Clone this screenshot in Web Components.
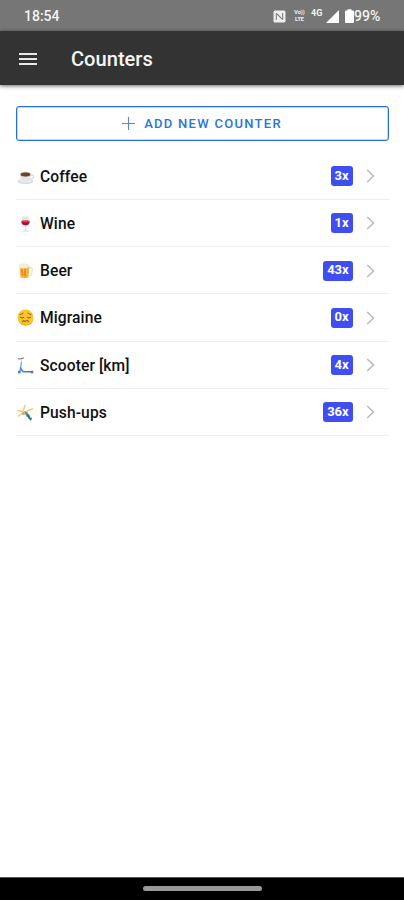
<!DOCTYPE html>
<html lang="en">
<head>
<meta charset="utf-8">
<title>Counters</title>
<style>
html,body{margin:0;height:100%;background:#fff}
body{font-family:Roboto,"Liberation Sans",sans-serif;overflow:hidden}
</style>
</head>
<body>
<counter-app></counter-app>
<script>
const define = (name, html) => {
  const template = document.createElement('template');
  template.innerHTML = html;
  customElements.define(name, class extends HTMLElement {
    constructor() {
      super();
      this.attachShadow({ mode: 'open' }).append(template.content.cloneNode(true));
    }
  });
};

const art = {
  coffee: '<ellipse cx="8.5" cy="13.3" rx="7.8" ry="2.7" fill="#d5d9dc"/><ellipse cx="8.5" cy="12.7" rx="6" ry="1.7" fill="#eef1f3"/><path d="M13 7.5q4-1.200 3.600 1.300-.5 2.200-4.400 2.400" fill="none" stroke="#d4d8db" stroke-width="1.200"/><path d="M3 6h11q0 7.500-4 7.500H7Q3 13.500 3 6z" fill="#e3e6e8"/><ellipse cx="8.500" cy="6.200" rx="5.500" ry="2.500" fill="#c6b8ae"/><ellipse cx="8.500" cy="6.500" rx="4.700" ry="1.900" fill="#70412c"/>',
  wine: '<path d="M5 1.500h7l.8 5.500q0 3.500-3.600 4v4l2.800 1v.8H5V16l2.800-1v-4Q4.200 10.500 4.200 7z" fill="#e2e5e9"/><path d="M4.400 6.300h8.200q.2 4-4.100 4-4.300 0-4.100-4z" fill="#b70c29"/><ellipse cx="8.500" cy="6.300" rx="4" ry="1.100" fill="#d83b50"/>',
  beer: '<path d="M11 6h3q1.500 0 1.300 2l-.6 4q-.3 1.500-3.200 2" fill="none" stroke="#e0e4e7" stroke-width="1.300"/><path d="M2.500 4h10l-1 11.500q-4 1.500-8 0z" fill="#f8b941"/><path d="M5 7l.5 7M8 7v7.500" stroke="#e88a1b" stroke-width="1.700"/><path d="M10.500 6L10 14" stroke="#f3aa38"/><path d="M1.500 3.300q2-2.500 4-1.500 2-1.300 3.500 0 3-.5 3.700 1.500.5 2.500-2.300 2.200-1 1.500-2.500.2-2 1.500-3.200.2-3 .8-3.200-2.600z" fill="#f4eddf"/>',
  migraine: '<circle cx="8.500" cy="8.500" r="8" fill="#fcc62b"/><path d="M2 12q3 4.500 9 3.300 4-1.300 5.200-5-.5 6-7.200 6.200Q4 16.500 2 12z" fill="#eea51c"/><path d="M3 5.600q1.800-.2 3-1.600M14 5.600q-1.800-.2-3-1.600M3.500 8.200q1.600 1.300 3 .2M13.500 8.200q-1.600 1.300-3 .2M5.500 12.800q.7-1.800 1.800-.8.900.8 1.800-.1 1.500-1.200 2.400.9" fill="none" stroke="#8b6120" stroke-width="1.050" stroke-linecap="round"/>',
  scooter: '<path d="M1 1.500q2 1.300 6-.7" fill="none" stroke="#8d7e7c" stroke-width="1.200"/><path d="M4.500 2v4" stroke="#c7d2db"/><path d="M4.500 5L3 14.500" stroke="#69a9f0" stroke-width="1.300"/><path d="M3.500 10.500q1 4.200 4 4.200h8" fill="none" stroke="#367bdc" stroke-width="1.500"/><circle cx="2.300" cy="15" r="1.500" fill="#697985"/><circle cx="15" cy="15" r="1.500" fill="#697985"/>',
  pushups: '<path d="M.8 6.500l5 1.300L8 1.500M10 7l5.500-2.200M6 8.800L1.500 12" fill="none" stroke="#f0c877" stroke-width="1.400" stroke-linecap="round" stroke-linejoin="round"/><circle cx="6.500" cy="9.500" r="1.500" fill="#d5a95c"/><path d="M7 7.500q2-1 3.300.7l2 3.500-2.600 1.600z" fill="#6b9496"/><path d="M9.500 10l2.500.6 1.600 2.800-2.200 1.300z" fill="#168279"/><path d="M12 14l1.700 1.700.7-2" fill="none" stroke="#546770" stroke-width="1.300"/>'
};

define('status-bar', `
<style>
:host{display:flex;box-sizing:border-box;height:31px;flex:none;padding:1px 21px 0 24px;align-items:center;justify-content:space-between;background:#767676;color:#f3f3f3;font-size:14px;font-weight:500}
.tray{display:flex;align-items:center}
svg{display:block}
.volte{display:flex;flex-direction:column;font-size:5.500px;line-height:7px;margin-left:6px;width:15px;text-align:center;font-weight:700}
.network{font-size:9px;line-height:9px;margin:-5px 2px 0 4px;width:13px;letter-spacing:.2px;font-weight:700}
.signal{margin-right:6px}
.level{width:29px;letter-spacing:0;white-space:nowrap}
</style>
<span>18:54</span>
<div class="tray">
<svg width="13" height="13" viewBox="0 0 13 13"><rect x=".5" y=".5" width="12" height="12" rx="1.500" fill="#eee"/><path d="M3.300 10V3.400l5.600 5.800M9.700 3v6.600L4.200 3.800" fill="none" stroke="#777" stroke-width="1"/></svg>
<div class="volte"><span>Vo))</span><span>LTE</span></div><div class="network">4G</div>
<svg class="signal" width="13" height="13" viewBox="0 0 13 13"><path d="M13 0v13H0z" fill="#fff"/></svg>
<svg width="9" height="14" viewBox="0 0 9 14"><path d="M2.500 1.500V.3h4v1.200H8q1 0 1 1V13q0 1-1 1H1q-1 0-1-1V2.500q0-1 1-1z" fill="#fff"/></svg>
<span class="level">99%</span>
</div>`);

define('app-bar', `
<style>
:host{display:flex;box-sizing:border-box;height:54px;flex:none;align-items:center;padding:1px 19px 0;gap:34px;background:#333;color:#f5f5f5;box-shadow:0 1px 4px #0009;position:relative}
svg{display:block}
h1{margin:0;font-size:20.100px;font-weight:500;line-height:26px}
</style>
<svg width="18" height="14" viewBox="0 0 18 14"><path d="M0 2h18M0 7h18M0 12h18" stroke="#e8e8e8" stroke-width="2.200"/></svg>
<h1><slot></slot></h1>`);

define('add-button', `
<style>
:host{display:flex;box-sizing:border-box;height:35px;border:1px solid #2470df;box-shadow:inset 0 0 0 .5px #2470df88;border-radius:3px;align-items:center;justify-content:center;color:#2875df;font-size:13px;font-weight:500;letter-spacing:1.280px;padding:0 1px 1px 0}
svg{margin-right:9px;flex:none}
span{white-space:nowrap}
</style>
<svg width="13" height="13" viewBox="0 0 13 13"><path d="M6.500 0v13M0 6.500h13" stroke="#5b83df" stroke-width="1.100"/></svg><span><slot></slot></span>`);

define('count-badge', `
<style>
:host{display:flex;box-sizing:border-box;min-width:22px;height:20px;padding:0 4px 2px;align-items:center;justify-content:center;border-radius:3px;background:#404df0;color:#fff;font-size:13px;font-weight:700;letter-spacing:-.1px}
</style><slot></slot>`);

customElements.define('counter-row', class extends HTMLElement {
  constructor() {
    super();
    this.attachShadow({ mode: 'open' }).innerHTML = `
<style>
:host{display:flex;box-sizing:border-box;height:47.250px;border-bottom:1px solid #ededed;align-items:center;padding:1px 14.500px 0 1px;color:#111;font-size:15.600px;font-weight:500}
svg{display:block;flex:none}
.name{flex:1;margin-left:6px;letter-spacing:.1px;padding-top:1px}
.arrow{margin-left:13px}
</style>
<svg width="17" height="17" viewBox="0 0 17 17">${art[this.getAttribute('icon')]}</svg>
<span class="name"><slot></slot></span>
<count-badge>${this.getAttribute('count')}x</count-badge>
<svg class="arrow" width="9" height="14" viewBox="0 0 9 14"><path d="M1.200 1l6.300 6-6.300 6" fill="none" stroke="#b9b9b9" stroke-width="1.500"/></svg>`;
  }
});

define('navigation-strip', `
<style>
:host{display:flex;height:23px;flex:none;background:#000;align-items:center;justify-content:center;box-sizing:border-box;border-top:1px solid #555;padding-bottom:2px}
div{width:119px;height:5px;border-radius:3px;background:#999}
</style><div></div>`);

define('counter-app', `
<style>
:host{display:flex;flex-direction:column;height:900px;background:#fff}
main{flex:1;padding:21px 15px 0 16px}
section{padding-top:11.500px}
</style>
<status-bar></status-bar>
<app-bar>Counters</app-bar>
<main>
<add-button>ADD NEW COUNTER</add-button>
<section>
<counter-row icon="coffee" count="3">Coffee</counter-row>
<counter-row icon="wine" count="1">Wine</counter-row>
<counter-row icon="beer" count="43">Beer</counter-row>
<counter-row icon="migraine" count="0">Migraine</counter-row>
<counter-row icon="scooter" count="4">Scooter [km]</counter-row>
<counter-row icon="pushups" count="36">Push-ups</counter-row>
</section>
</main>
<navigation-strip></navigation-strip>`);
</script>
</body>
</html>
